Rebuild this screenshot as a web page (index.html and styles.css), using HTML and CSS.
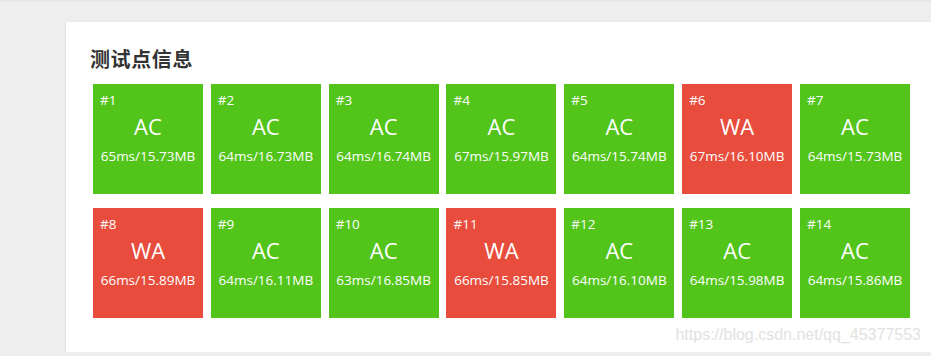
FILE: index.html
```html
<!DOCTYPE html>
<html lang="zh">
<head>
<meta charset="utf-8">
<link rel="stylesheet" href="styles.css">
</head>
<body>
<div class="topbar"></div>
<div class="card">
  <h3 class="title">测试点信息</h3>
  <div class="grid">
    <div class="case ac"><span class="id">#1</span><span class="res">AC</span><span class="stat">65ms/15.73MB</span></div>
    <div class="case ac"><span class="id">#2</span><span class="res">AC</span><span class="stat">64ms/16.73MB</span></div>
    <div class="case ac"><span class="id">#3</span><span class="res">AC</span><span class="stat">64ms/16.74MB</span></div>
    <div class="case ac"><span class="id">#4</span><span class="res">AC</span><span class="stat">67ms/15.97MB</span></div>
    <div class="case ac"><span class="id">#5</span><span class="res">AC</span><span class="stat">64ms/15.74MB</span></div>
    <div class="case wa"><span class="id">#6</span><span class="res">WA</span><span class="stat">67ms/16.10MB</span></div>
    <div class="case ac"><span class="id">#7</span><span class="res">AC</span><span class="stat">64ms/15.73MB</span></div>
    <div class="case wa"><span class="id">#8</span><span class="res">WA</span><span class="stat">66ms/15.89MB</span></div>
    <div class="case ac"><span class="id">#9</span><span class="res">AC</span><span class="stat">64ms/16.11MB</span></div>
    <div class="case ac"><span class="id">#10</span><span class="res">AC</span><span class="stat">63ms/16.85MB</span></div>
    <div class="case wa"><span class="id">#11</span><span class="res">WA</span><span class="stat">66ms/15.85MB</span></div>
    <div class="case ac"><span class="id">#12</span><span class="res">AC</span><span class="stat">64ms/16.10MB</span></div>
    <div class="case ac"><span class="id">#13</span><span class="res">AC</span><span class="stat">64ms/15.98MB</span></div>
    <div class="case ac"><span class="id">#14</span><span class="res">AC</span><span class="stat">64ms/15.86MB</span></div>
  </div>
  <div class="watermark">https://blog.csdn.net/qq_45377553</div>
</div>
</body>
</html>
```
FILE: styles.css
```css
html, body {
  margin: 0;
  padding: 0;
  background: #eeeeee;
  font-family: "Open Sans", "Noto Sans", "Noto Sans CJK SC", sans-serif;
}
.topbar {
  height: 3px;
  background: linear-gradient(#e4e4e4, #eeeeee);
}
.card {
  position: relative;
  margin: 19px 0 0 66px;
  height: 330px;
  background: #ffffff;
  box-shadow: 0 1px 3px rgba(0,0,0,0.10);
  padding: 0 0 0 24px;
  box-sizing: border-box;
}
.title {
  margin: 0;
  padding-top: 24px;
  font-family: "Noto Sans CJK SC", sans-serif;
  font-size: 20px;
  font-weight: 700;
  line-height: 26px;
  color: #333333;
  letter-spacing: 0.6px;
}
.grid {
  display: grid;
  grid-template-columns: repeat(7, 110px);
  column-gap: 7.83px;
  row-gap: 14px;
  margin: 12px 0 0 3px;
}
.case {
  height: 110px;
  display: flex;
  flex-direction: column;
  color: #ffffff;
  padding: 7px 7px 0;
  box-sizing: border-box;
}
.ac { background: #52c41a; }
.wa { background: #e74c3c; }
.id {
  font-size: 13.5px;
  line-height: 18px;
}
.res {
  text-align: center;
  font-size: 22px;
  line-height: 26px;
  margin-top: 4px;
}
.stat {
  text-align: center;
  font-size: 13.5px;
  line-height: 18px;
  margin-top: 8px;
  white-space: nowrap;
}
.watermark {
  position: absolute;
  right: 10px;
  bottom: 8px;
  font-family: "Liberation Sans", Arial, sans-serif;
  font-size: 16px;
  color: #e2e2e2;
}
```
